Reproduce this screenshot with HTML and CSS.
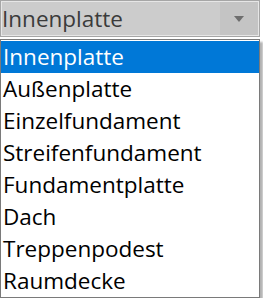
FILE: index.html
```html
<!DOCTYPE html>
<html lang="de">
<head>
    <meta charset="UTF-8">
    <meta name="viewport" content="width=device-width, initial-scale=1.0">
    <title>Bauteil</title>
    <link rel="stylesheet" href="styles.css">
</head>
<body>
    <div class="combo">
        <div class="combo-box">
            <span class="combo-value">Innenplatte</span>
            <span class="combo-btn">
                <svg width="10" height="6" viewBox="0 0 10 6"><path d="M0 0H10L5 6Z" fill="#6e6e6e"/></svg>
            </span>
        </div>

        <!-- dropdown list -->
        <ul class="combo-list">
            <li class="selected">Innenplatte</li>
            <li>Außenplatte</li>
            <li>Einzelfundament</li>
            <li>Streifenfundament</li>
            <li>Fundamentplatte</li>
            <li>Dach</li>
            <li>Treppenpodest</li>
            <li>Raumdecke</li>
        </ul>
    </div>
</body>
</html>
```

FILE: styles.css
```css
* {
    margin: 0;
    padding: 0;
    box-sizing: border-box;
}

body {
    background-color: white;
    font-family: "Open Sans", "Noto Sans", sans-serif;
}

.combo {
    width: 260px;
}

.combo-box {
    display: flex;
    height: 37px;
    border: 1px solid #a6a6a6;
    box-shadow: inset 0 0 0 1px #e6e6e6;
    background-color: #cccccc;
}

.combo-value {
    flex: 1;
    padding: 2px 0 0 1px;
    font-size: 22.5px;
    line-height: 32px;
    color: #3b3b3b;
}

.combo-btn {
    width: 38px;
    margin: 1px 1px 1px 0;
    background-color: #c4c4c4;
    display: flex;
    align-items: center;
    justify-content: center;
}

.combo-list {
    list-style: none;
    margin-top: 2px;
    padding-top: 1px;
    border: 1px solid #7a7a7a;
    background-color: white;
    box-shadow: 3px 3px 2px rgba(0, 0, 0, 0.3);
}

.combo-list li {
    height: 32px;
    padding-left: 2px;
    font-size: 22.5px;
    line-height: 31px;
    color: black;
}

.combo-list li.selected {
    background-color: #0078d7;
    color: white;
}
```
